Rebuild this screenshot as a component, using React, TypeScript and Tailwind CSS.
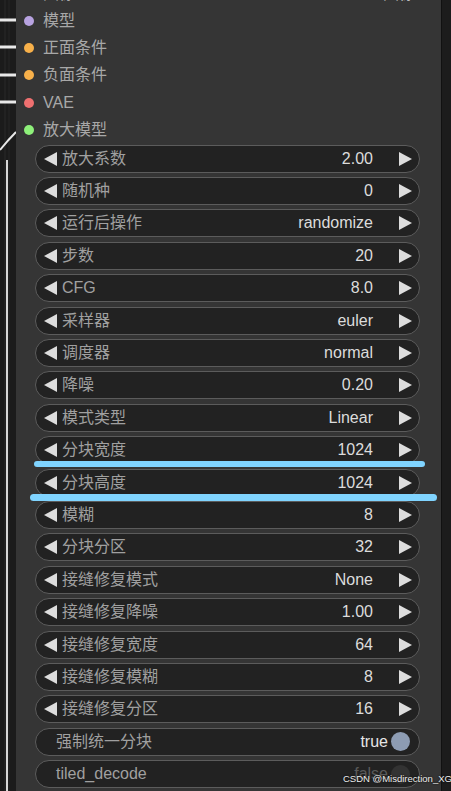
import React from "react";

const inputs = [
  { name: "模型", color: "bg-[#b7a2e0]" },
  { name: "正面条件", color: "bg-[#f7b04a]" },
  { name: "负面条件", color: "bg-[#f7b04a]" },
  { name: "VAE", color: "bg-[#ef7070]" },
  { name: "放大模型", color: "bg-[#8ef07a]" },
];

const widgets = [
  ["放大系数", "2.00"],
  ["随机种", "0"],
  ["运行后操作", "randomize"],
  ["步数", "20"],
  ["CFG", "8.0"],
  ["采样器", "euler"],
  ["调度器", "normal"],
  ["降噪", "0.20"],
  ["模式类型", "Linear"],
  ["分块宽度", "1024"],
  ["分块高度", "1024"],
  ["模糊", "8"],
  ["分块分区", "32"],
  ["接缝修复模式", "None"],
  ["接缝修复降噪", "1.00"],
  ["接缝修复宽度", "64"],
  ["接缝修复模糊", "8"],
  ["接缝修复分区", "16"],
];

function Arrow({ dir }: { dir: "left" | "right" }) {
  return (
    <svg width="13" height="14" viewBox="0 0 13 14" className="shrink-0">
      {dir === "left" ? (
        <polygon points="13,0 13,14 0,7" fill="#dddddd" />
      ) : (
        <polygon points="0,0 0,14 13,7" fill="#dddddd" />
      )}
    </svg>
  );
}

function NumberWidget({ label, value }: { label: string; value: string }) {
  return (
    <div className="h-[28px] rounded-full bg-[#222] border border-[#5c5c5c] flex items-center pl-[8px] pr-[7px]">
      <Arrow dir="left" />
      <span className="ml-[5px] text-[#a0a0a0]">{label}</span>
      <span className="ml-auto text-[#dcdcdc]">{value}</span>
      <span className="ml-[26px]">
        <Arrow dir="right" />
      </span>
    </div>
  );
}

function Toggle({ label, on }: { label: string; on: boolean }) {
  return (
    <div className="h-[28px] rounded-full bg-[#222] border border-[#5c5c5c] flex items-center pl-[20px] pr-[9px]">
      <span className="text-[#a0a0a0]">{label}</span>
      <span className={"ml-auto " + (on ? "text-[#e6e6e6]" : "text-[#5a5a5a]")}>{on ? "true" : "false"}</span>
      <span
        className={
          "ml-[3px] w-[19px] h-[19px] rounded-full " + (on ? "bg-[#8d9cb3]" : "bg-[#333]")
        }
      />
    </div>
  );
}

export default function App() {
  return (
    <div
      className="relative w-[451px] h-[791px] overflow-hidden bg-[#1a1a1a] flex text-[16px] leading-none"
      style={{ fontFamily: '"Liberation Sans", "Noto Sans CJK SC", sans-serif' }}
    >
      {/* canvas + links on the left */}
      <svg width="16" height="791" className="shrink-0">
        <rect width="16" height="791" fill="#1b1b1b" />
        <line x1="5" y1="0" x2="5" y2="791" stroke="#2a2a2a" strokeWidth="1" />
        <line x1="9" y1="0" x2="9" y2="791" stroke="#262626" strokeWidth="1" />
        {[20, 47, 75, 102].map((y) => (
          <line key={y} x1="0" y1={y} x2="16" y2={y} stroke="#e8e8e8" strokeWidth="3" />
        ))}
        <path d="M0 150 Q8 140 16 132" stroke="#e8e8e8" strokeWidth="2" fill="none" />
        <line x1="7" y1="160" x2="7" y2="791" stroke="#d8d8d8" strokeWidth="2" />
      </svg>

      {/* node body */}
      <div className="w-[425px] shrink-0 bg-[#353535] flex flex-col">
        <div className="h-[27px] -mt-[20px] flex items-center pl-[27px] pr-[26px] text-[#aaa]">
          <span>图像</span>
          <span className="ml-auto text-[#bbb]">图像</span>
        </div>
        {inputs.map((i) => (
          <div key={i.name} className="h-[27.33px] flex items-center pl-[8px]">
            <span className={"w-[10px] h-[10px] rounded-full " + i.color} />
            <span className="ml-[9px] text-[#a8a8a8]">{i.name}</span>
          </div>
        ))}
        <div className="mt-[1px] pl-[19px] pr-[21px] flex flex-col gap-[4.4px]">
          {widgets.map(([l, v]) => (
            <NumberWidget key={l} label={l} value={v} />
          ))}
          <Toggle label="强制统一分块" on />
          <Toggle label="tiled_decode" on={false} />
        </div>
      </div>

      {/* right edge of canvas */}
      <div className="flex-1 bg-[#1c1c1c] border-l border-[#111]" />

      {/* annotation highlights */}
      <div className="absolute left-[34px] top-[461px] w-[391px] h-[6px] rounded-full bg-[#80d4ff]" />
      <div className="absolute left-[30px] top-[494px] w-[407px] h-[7px] rounded-full bg-[#80d4ff]" />

      {/* watermark */}
      <div className="absolute left-[343px] top-[774px] whitespace-nowrap text-[9.5px] text-[#eeeeee] [text-shadow:0_0_2px_#000]">
        CSDN @Misdirection_XG
      </div>
    </div>
  );
}
